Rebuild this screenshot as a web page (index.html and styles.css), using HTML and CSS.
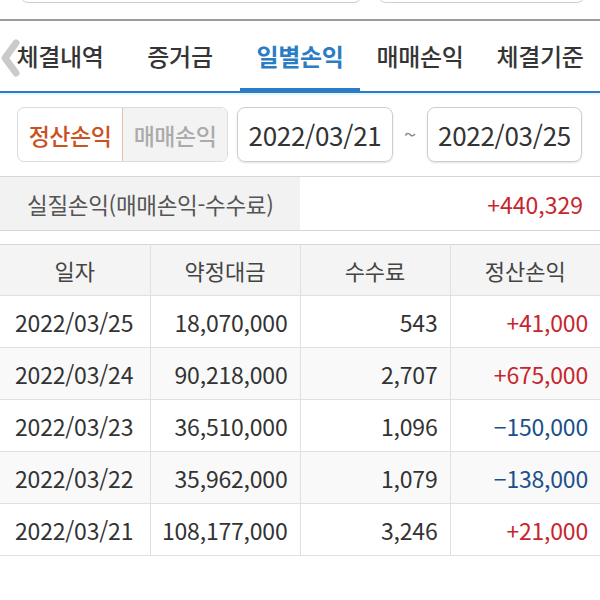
FILE: index.html
```html
<!DOCTYPE html>
<html lang="ko">
<head>
<meta charset="utf-8">
<link rel="stylesheet" href="styles.css">
</head>
<body>
<div class="topbar">
  <div class="topbox topbox-a"></div>
  <div class="topbox topbox-b"></div>
</div>
<nav class="tabs">
  <span class="chev"><svg width="20" height="38" viewBox="0 0 20 38"><path d="M16 4 L5 19 L16 34" fill="none" stroke="#cacaca" stroke-width="7" stroke-linecap="round" stroke-linejoin="round"/></svg></span>
  <div class="tab">체결내역</div>
  <div class="tab">증거금</div>
  <div class="tab active">일별손익</div>
  <div class="tab">매매손익</div>
  <div class="tab">체결기준</div>
</nav>
<div class="cyan"></div>
<div class="controls">
  <div class="seg">
    <div class="seg-item on">정산손익</div>
    <div class="seg-item off">매매손익</div>
  </div>
  <div class="datebox d1">2022/03/21</div>
  <div class="tilde">~</div>
  <div class="datebox d2">2022/03/25</div>
</div>
<div class="summary">
  <div class="sum-label">실질손익(매매손익-수수료)</div>
  <div class="sum-value red">+440,329</div>
</div>
<table class="grid">
  <thead>
    <tr><th>일자</th><th>약정대금</th><th>수수료</th><th>정산손익</th></tr>
  </thead>
  <tbody>
    <tr><td class="date">2022/03/25</td><td>18,070,000</td><td>543</td><td class="red">+41,000</td></tr>
    <tr class="alt"><td class="date">2022/03/24</td><td>90,218,000</td><td>2,707</td><td class="red">+675,000</td></tr>
    <tr><td class="date">2022/03/23</td><td>36,510,000</td><td>1,096</td><td class="blue">−150,000</td></tr>
    <tr class="alt"><td class="date">2022/03/22</td><td>35,962,000</td><td>1,079</td><td class="blue">−138,000</td></tr>
    <tr><td class="date">2022/03/21</td><td>108,177,000</td><td>3,246</td><td class="red">+21,000</td></tr>
  </tbody>
</table>
</body>
</html>
```
FILE: styles.css
```css
* { box-sizing: border-box; }
html, body { margin: 0; padding: 0; background: #fff; }
body {
  width: 600px;
  font-family: "Noto Sans CJK KR", "Noto Sans", sans-serif;
  color: #333;
}
.topbar {
  height: 19px;
  overflow: hidden;
  display: flex;
  align-items: flex-end;
  padding: 0 15px 16px 20px;
  gap: 16px;
}
.topbox {
  height: 40px;
  flex: none;
  border: 1px solid #cfcfcf;
  border-radius: 0 0 8px 8px;
}
.topbox-a { width: 342px; }
.topbox-b { width: 207px; }
.tabs {
  position: relative;
  border-top: 2px solid #9c9c9c;
  border-bottom: 2px solid #2b7cc3;
  height: 74px;
  display: flex;
}
.chev { position: absolute; left: 0; top: 18px; width: 20px; height: 38px; }
.chev svg { display: block; }
.tab {
  width: 120px;
  text-align: center;
  font-size: 24px;
  font-weight: 500;
  line-height: 70px;
  color: #353535;
  letter-spacing: -0.3px;
  white-space: nowrap;
}
.tab:first-child { }
.tab.active {
  color: #2b7cc3;
  font-weight: 700;
  box-shadow: inset 0 -3px 0 #2b7cc3;
}
.cyan { height: 2px; background: #e6f5fb; }
.controls {
  display: flex;
  align-items: center;
  padding: 12px 0 14px 17px;
}
.seg {
  display: flex;
  width: 211px;
  height: 55px;
  border: 1px solid #dcdcdc;
  border-radius: 7px;
  overflow: hidden;
}
.seg-item {
  flex: 1;
  display: flex;
  align-items: center;
  justify-content: center;
  font-size: 23px;
  font-weight: 500;
  letter-spacing: -0.5px;
  white-space: nowrap;
}
.seg-item.on {
  color: #c9531f;
  background: #fff;
  border: 1px solid #e7bfa3;
  border-radius: 7px 0 0 7px;
  margin: -1px 0 -1px -1px;
}
.seg-item.off { color: #ababab; background: #f3f3f3; }
.datebox {
  height: 55px;
  display: flex;
  align-items: center;
  justify-content: center;
  border: 1px solid #cdcdcd;
  border-radius: 8px;
  box-shadow: 0 1px 2px rgba(0,0,0,0.12);
  font-size: 26px;
  color: #333;
  letter-spacing: -0.3px;
}
.d1 { width: 156px; margin-left: 9px; }
.d2 { width: 155px; }
.tilde {
  width: 34px;
  text-align: center;
  font-size: 22px;
  color: #888;
  padding-bottom: 4px;
}
.summary {
  display: flex;
  height: 55px;
  border-top: 1px solid #d6d6d6;
  border-bottom: 1px solid #d6d6d6;
  margin-bottom: 13px;
}
.sum-label {
  width: 300px;
  background: #f2f2f2;
  display: flex;
  align-items: center;
  padding-left: 27px;
  font-size: 22.5px;
  color: #555;
  letter-spacing: -0.3px;
  white-space: nowrap;
}
.sum-value {
  flex: 1;
  display: flex;
  align-items: center;
  justify-content: flex-end;
  padding-right: 17px;
  font-size: 23px;
}
.red { color: #c8262e; }
.blue { color: #1b4f8c; }
.grid {
  width: 600px;
  border-collapse: collapse;
  table-layout: fixed;
  font-size: 23px;
}
.grid th, .grid td {
  width: 150px;
  border: 1px solid #e0e0e0;
  padding: 0 12px 0 0;
  white-space: nowrap;
}
.grid tr > :first-child { border-left: none; }
.grid tr > :last-child { border-right: none; }
.grid th {
  height: 51px;
  background: #f4f4f4;
  font-weight: 400;
  font-size: 22px;
  color: #444;
  text-align: center;
  padding: 0;
  border-top: 1px solid #d6d6d6;
}
.grid td {
  height: 52px;
  text-align: right;
  color: #333;
  letter-spacing: -0.2px;
}
.grid td.date { text-align: left; padding: 0 0 0 15px; }
.grid td.red { color: #c8262e; }
.grid td.blue { color: #1b4f8c; }
.grid tr.alt td { background: #f9f9f9; }
```
